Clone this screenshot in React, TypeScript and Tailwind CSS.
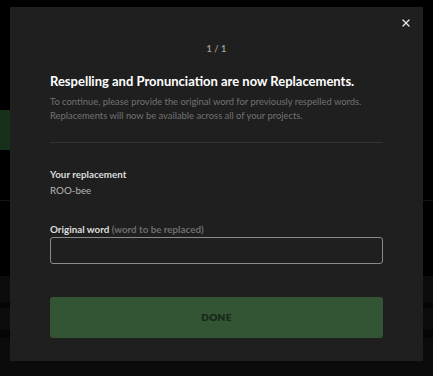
import { X } from "lucide-react";

function Backdrop() {
  // página de fondo, casi invisible detrás del overlay
  return (
    <div className="flex h-[376px] w-full flex-col bg-black">
      <div className="h-[110px]" />
      <div className="h-[40px] w-[14px] bg-[#17301a]" />
      <div className="h-[50px]" />
      <div className="h-px w-full bg-[#141414]" />
      <div className="h-[75px]" />
      <div className="h-[26px] w-full bg-[#0c0c0c]" />
      <div className="h-[6px] w-full bg-[#050505]" />
      <div className="h-[22px] w-full bg-[#0c0c0c]" />
      <div className="h-[8px] w-full bg-[#050505]" />
      <div className="flex-1 bg-[#0b0b0b]" />
    </div>
  );
}

export default function App() {
  return (
    <main
      className="relative h-[376px] w-[433px] overflow-hidden bg-black"
      style={{ fontFamily: "Lato, 'Open Sans', sans-serif" }}
    >
      <Backdrop />

      <section className="absolute left-[10px] top-[7px] h-[354px] w-[413px] bg-[#1f1f1f] px-10 pt-[35px]">
        <button className="absolute right-[11px] top-[10px] text-[#e6e6e6]">
          <X size={12} strokeWidth={2.5} />
        </button>

        <p className="text-center text-[9px] font-bold leading-[14px] tracking-wide text-[#9a9a9a]">
          1 / 1
        </p>

        <h1 className="mt-[16px] text-[13px] font-bold leading-[18px] text-white">
          Respelling and Pronunciation are now Replacements.
        </h1>
        <p className="mt-[5px] text-[9.4px] leading-[14px] text-[#727272]">
          To continue, please provide the original word for previously respelled words.
          <br />
          Replacements will now be available across all of your projects.
        </p>

        <div className="mt-[19px] h-px w-full bg-[#333333]" />

        <div className="mt-[24px]">
          <p className="text-[9.8px] font-bold leading-[14px] text-[#dddddd]">
            Your replacement
          </p>
          <p className="mt-[2px] text-[9.8px] leading-[14px] text-[#b5b5b5]">ROO-bee</p>
        </div>

        <div className="mt-[25px]">
          <label className="block text-[9.8px] font-bold leading-[14px] text-[#dddddd]">
            Original word{" "}
            <span className="font-bold text-[#6e6e6e]">(word to be replaced)</span>
          </label>
          <input
            className="mt-[1px] block h-[27px] w-full rounded-[3px] border border-[#8a8a8a] bg-[#1f1f1f] px-2 text-[10px] text-white outline-none"
            type="text"
          />
        </div>

        <button className="mt-[33px] flex h-[41px] w-full items-center justify-center rounded-[3px] bg-[#335533] text-[10px] font-extrabold tracking-wide text-[#182818]">
          DONE
        </button>
      </section>
    </main>
  );
}
